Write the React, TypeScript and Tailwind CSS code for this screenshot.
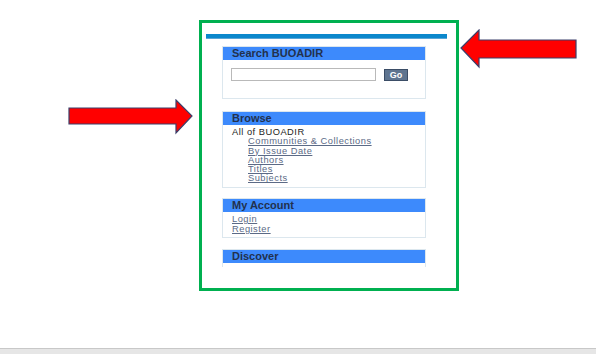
const browseLinks = [
  "Communities & Collections",
  "By Issue Date",
  "Authors",
  "Titles",
  "Subjects",
];

function Arrow({ dir }: { dir: "left" | "right" }) {
  if (dir === "right") {
    return (
      <svg width="126" height="36" viewBox="0 0 126 36">
        <polygon
          points="1,9 108,9 108,1 124,17 108,34 108,25 1,25"
          fill="#ff0000"
          stroke="#3b3f6b"
          strokeWidth="1.2"
        />
      </svg>
    );
  }
  return (
    <svg width="118" height="40" viewBox="0 0 118 40">
      <polygon
        points="1,19 19,1 19,11 116,11 116,29 19,29 19,38"
        fill="#ff0000"
        stroke="#3b3f6b"
        strokeWidth="1.2"
      />
    </svg>
  );
}

function SideBox({
  title,
  className,
  children,
}: {
  title: string;
  className?: string;
  children?: React.ReactNode;
}) {
  return (
    <div className={`ml-[20px] w-[204px] border border-[#dce7ee] ${className ?? ""}`}>
      <div className="h-[13px] bg-[#3d8afc] pl-[9px] text-[11px] font-bold leading-[13px] text-[#22314d]">
        {title}
      </div>
      {children}
    </div>
  );
}

export default function App() {
  return (
    <div
      className="relative flex h-[354px] w-[596px] flex-col bg-white"
      style={{ fontFamily: '"Liberation Sans", Arial, sans-serif' }}
    >
      <div className="flex-1">
        {/* annotated sidebar */}
        <div className="ml-[199px] mt-[20px] h-[271px] w-[260px] border-[3px] border-[#00b050] pt-[11px]">
          <div className="ml-[4px] h-[5px] w-[241px] border-b border-[#5aa6d6] bg-[#0b88cc]" />

          <SideBox title="Search BUOADIR" className="mt-[7px] h-[53px]">
            <div className="flex items-center pl-[8px] pt-[8px]">
              <div className="h-[13px] w-[145px] border border-[#b9b9b9] bg-white" />
              <button className="ml-[8px] h-[12px] w-[24px] border border-[#3b4d66] bg-[#5f7590] text-[9px] font-bold leading-[10px] text-white">
                Go
              </button>
            </div>
          </SideBox>

          <SideBox title="Browse" className="mt-[12px] h-[77px]">
            <div className="pl-[9px] pt-[3px] text-[9.3px] leading-[9.3px] tracking-[0.5px] text-[#1c1c1c]">
              <div>All of BUOADIR</div>
              {browseLinks.map((l) => (
                <div key={l} className="pl-[16px]">
                  <a href="#" className="text-[#5b6a86] underline">
                    {l}
                  </a>
                </div>
              ))}
            </div>
          </SideBox>

          <SideBox title="My Account" className="mt-[10px] h-[40px]">
            <div className="pl-[9px] pt-[3px] text-[9.3px] leading-[9.5px] tracking-[0.5px]">
              <div>
                <a href="#" className="text-[#5b6a86] underline">Login</a>
              </div>
              <div>
                <a href="#" className="text-[#5b6a86] underline">Register</a>
              </div>
            </div>
          </SideBox>

          <SideBox title="Discover" className="mt-[11px] h-[18px] border-b-0" />
        </div>
      </div>

      <div className="h-[6px] border-t border-[#c8c8c8] bg-[#e6e6e6]" />

      {/* annotation arrows */}
      <div className="absolute left-[68px] top-[99px]">
        <Arrow dir="right" />
      </div>
      <div className="absolute left-[460px] top-[29px]">
        <Arrow dir="left" />
      </div>
    </div>
  );
}
